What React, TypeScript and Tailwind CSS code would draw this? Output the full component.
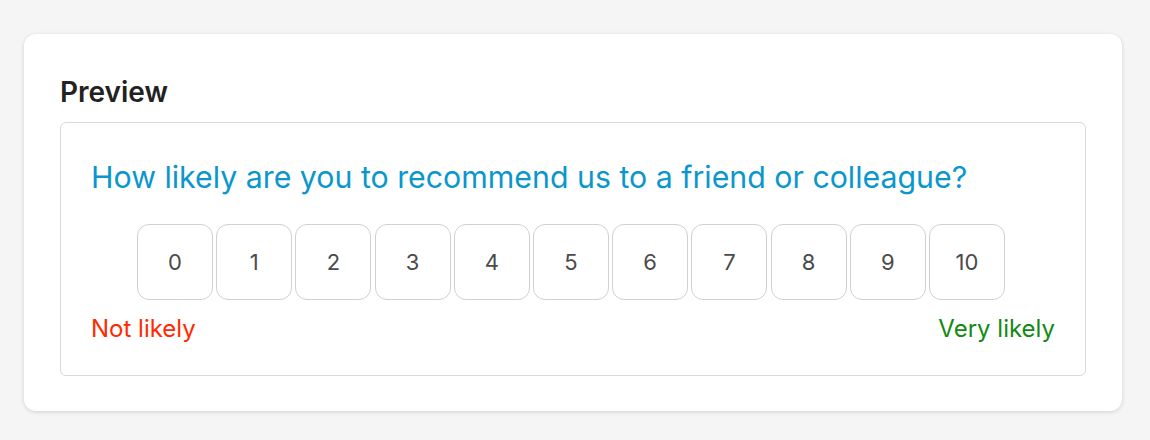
export default function App() {
  const scores = Array.from({ length: 11 }, (_, i) => i);
  return (
    <div
      className="min-h-[440px] w-full bg-[#f5f5f5] pl-6 pr-7 pt-[34px]"
      style={{ fontFamily: "Inter, 'Noto Sans', 'Liberation Sans', sans-serif" }}
    >
      <div className="rounded-xl bg-white px-9 pt-[42px] pb-[35px] shadow-[0_1px_4px_rgba(0,0,0,0.15)]">
        <h2 className="text-[28px] font-semibold leading-8 text-[#222]">Preview</h2>
        <div className="mt-[14px] rounded-md border border-[#d9d9d9] px-[30px] pt-[36px] pb-[30px]">
          <p className="text-[30.3px] leading-9 text-[#0b97cc]">
            How likely are you to recommend us to a friend or colleague?
          </p>
          <div className="mt-[29px] flex justify-center gap-[3.2px] pr-[4px]">
            {scores.map((n) => (
              <button
                key={n}
                className="flex h-[76px] w-[76px] items-center justify-center rounded-xl border border-[#d0d0d0] bg-white text-[22px] text-[#4a4a4a]"
              >
                {n}
              </button>
            ))}
          </div>
          <div className="mt-[13px] flex justify-between text-[24px] leading-8">
            <span className="text-[#ff2a00]">Not likely</span>
            <span className="text-[#128a12]">Very likely</span>
          </div>
        </div>
      </div>
    </div>
  );
}
